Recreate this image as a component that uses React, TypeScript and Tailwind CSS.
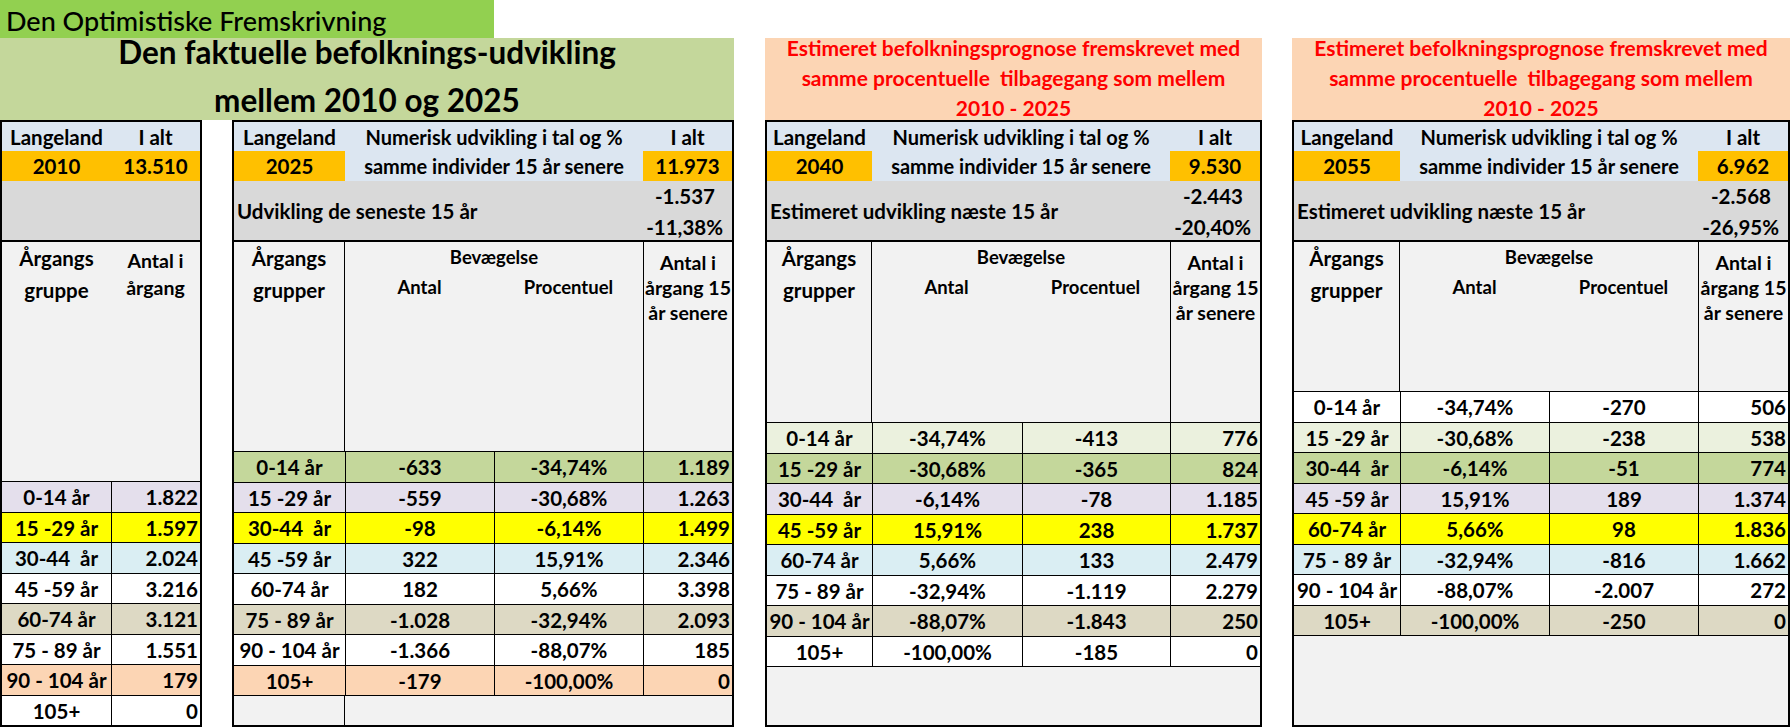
import React from 'react';

type Row = { g: string; a?: string; b?: string; n: string; bg: string };

const LAV = 'bg-[#e4dfec]';
const YEL = 'bg-[#ffff00]';
const BLU = 'bg-[#daeef3]';
const WHI = 'bg-white';
const TAN = 'bg-[#ddd9c4]';
const PCH = 'bg-[#fcd5b4]';
const GRN = 'bg-[#c4d79b]';
const LGR = 'bg-[#ebf1de]';

const rows2010: Row[] = [
  { g: '0-14 år', n: '1.822', bg: LAV },
  { g: '15 -29 år', n: '1.597', bg: YEL },
  { g: '30-44  år', n: '2.024', bg: BLU },
  { g: '45 -59 år', n: '3.216', bg: WHI },
  { g: '60-74 år', n: '3.121', bg: TAN },
  { g: '75 - 89 år', n: '1.551', bg: WHI },
  { g: '90 - 104 år', n: '179', bg: PCH },
  { g: '105+', n: '0', bg: WHI },
];

const rows2025: Row[] = [
  { g: '0-14 år', a: '-633', b: '-34,74%', n: '1.189', bg: GRN },
  { g: '15 -29 år', a: '-559', b: '-30,68%', n: '1.263', bg: LAV },
  { g: '30-44  år', a: '-98', b: '-6,14%', n: '1.499', bg: YEL },
  { g: '45 -59 år', a: '322', b: '15,91%', n: '2.346', bg: BLU },
  { g: '60-74 år', a: '182', b: '5,66%', n: '3.398', bg: WHI },
  { g: '75 - 89 år', a: '-1.028', b: '-32,94%', n: '2.093', bg: TAN },
  { g: '90 - 104 år', a: '-1.366', b: '-88,07%', n: '185', bg: WHI },
  { g: '105+', a: '-179', b: '-100,00%', n: '0', bg: PCH },
];

const rows2040: Row[] = [
  { g: '0-14 år', a: '-34,74%', b: '-413', n: '776', bg: LGR },
  { g: '15 -29 år', a: '-30,68%', b: '-365', n: '824', bg: GRN },
  { g: '30-44  år', a: '-6,14%', b: '-78', n: '1.185', bg: LAV },
  { g: '45 -59 år', a: '15,91%', b: '238', n: '1.737', bg: YEL },
  { g: '60-74 år', a: '5,66%', b: '133', n: '2.479', bg: BLU },
  { g: '75 - 89 år', a: '-32,94%', b: '-1.119', n: '2.279', bg: WHI },
  { g: '90 - 104 år', a: '-88,07%', b: '-1.843', n: '250', bg: TAN },
  { g: '105+', a: '-100,00%', b: '-185', n: '0', bg: WHI },
];

const rows2055: Row[] = [
  { g: '0-14 år', a: '-34,74%', b: '-270', n: '506', bg: WHI },
  { g: '15 -29 år', a: '-30,68%', b: '-238', n: '538', bg: LGR },
  { g: '30-44  år', a: '-6,14%', b: '-51', n: '774', bg: GRN },
  { g: '45 -59 år', a: '15,91%', b: '189', n: '1.374', bg: LAV },
  { g: '60-74 år', a: '5,66%', b: '98', n: '1.836', bg: YEL },
  { g: '75 - 89 år', a: '-32,94%', b: '-816', n: '1.662', bg: BLU },
  { g: '90 - 104 år', a: '-88,07%', b: '-2.007', n: '272', bg: WHI },
  { g: '105+', a: '-100,00%', b: '-250', n: '0', bg: TAN },
];

function OrangeTitle() {
  return (
    <div className="flex h-[82px] flex-col items-center justify-center bg-[#fcd5b4] pb-[3px] text-[21px] font-bold leading-[30px] text-[#ff0000]">
      <div>Estimeret befolkningsprognose fremskrevet med</div>
      <div className="whitespace-pre">samme procentuelle  tilbagegang som mellem</div>
      <div>2010 - 2025</div>
    </div>
  );
}

function FirstTable() {
  return (
    <div className="flex h-[607px] w-[202px] flex-col border-2 border-black text-[20.5px] font-bold">
      <div className="grid h-[29px] grid-cols-[109px_1fr] items-center bg-[#dce6f1] text-center">
        <div>Langeland</div>
        <div>I alt</div>
      </div>
      <div className="grid h-[30px] grid-cols-[109px_1fr] items-center bg-[#ffc000] text-center">
        <div>2010</div>
        <div>13.510</div>
      </div>
      <div className="h-[61px] border-b-2 border-black bg-[#d9d9d9]" />
      <div className="grid h-[239px] grid-cols-[109px_1fr] bg-[#f2f2f2] text-center">
        <div className="leading-[32px]">
          <div>Årgangs</div>
          <div>gruppe</div>
        </div>
        <div className="pt-[5px] text-[19.5px] leading-[27px]">
          <div>Antal i</div>
          <div>årgang</div>
        </div>
      </div>
      {rows2010.map((r) => (
        <div key={r.g} className={`grid h-[30.5px] grid-cols-[109px_1fr] border-t border-black ${r.bg}`}>
          <div className="flex items-center justify-center whitespace-pre">{r.g}</div>
          <div className="flex items-center justify-end border-l border-black pr-[2px]">{r.n}</div>
        </div>
      ))}
    </div>
  );
}

function Prognose({
  cols,
  year,
  total,
  label,
  delta,
  pct,
  headH,
  rows,
  splitFiller,
}: {
  cols: string;
  year: string;
  total: string;
  label: string;
  delta: string;
  pct: string;
  headH: string;
  rows: Row[];
  splitFiller?: boolean;
}) {
  return (
    <div className="flex h-[607px] flex-col border-2 border-black text-[20.5px] font-bold">
      <div className={`grid h-[29px] items-center bg-[#dce6f1] text-center ${cols}`}>
        <div>Langeland</div>
        <div className="col-span-2 text-[20px]">Numerisk udvikling i tal og %</div>
        <div>I alt</div>
      </div>
      <div className={`grid h-[30px] bg-[#dce6f1] text-center ${cols}`}>
        <div className="flex items-center justify-center bg-[#ffc000]">{year}</div>
        <div className="col-span-2 flex items-center justify-center text-[20px]">samme individer 15 år senere</div>
        <div className="flex items-center justify-center bg-[#ffc000]">{total}</div>
      </div>
      <div className={`grid h-[61px] border-b-2 border-black bg-[#d9d9d9] ${cols}`}>
        <div className="col-span-3 flex items-center whitespace-nowrap pl-[3px]">{label}</div>
        <div className="flex flex-col">
          <div className="flex flex-1 items-center justify-end pr-[17px]">{delta}</div>
          <div className="flex flex-1 items-center justify-end pr-[9px]">{pct}</div>
        </div>
      </div>
      <div className={`grid bg-[#f2f2f2] text-center ${headH} ${cols}`}>
        <div className="border-r border-black leading-[32px]">
          <div>Årgangs</div>
          <div>grupper</div>
        </div>
        <div className="col-span-2 flex flex-col text-[18.5px] leading-[30px]">
          <div>Bevægelse</div>
          <div className="grid grid-cols-2">
            <div>Antal</div>
            <div>Procentuel</div>
          </div>
        </div>
        <div className="whitespace-nowrap border-l border-black pt-[8px] text-[19.5px] leading-[25px]">
          <div>Antal i</div>
          <div>årgang 15</div>
          <div>år senere</div>
        </div>
      </div>
      {rows.map((r) => (
        <div key={r.g} className={`grid h-[30.5px] border-t border-black ${r.bg} ${cols}`}>
          <div className="flex items-center justify-center whitespace-pre">{r.g}</div>
          <div className="flex items-center justify-center border-l border-black">{r.a}</div>
          <div className="flex items-center justify-center border-l border-black">{r.b}</div>
          <div className="flex items-center justify-end border-l border-black pr-[2px]">{r.n}</div>
        </div>
      ))}
      <div className={`grid flex-1 border-t border-black bg-[#f2f2f2] ${cols}`}>
        <div className={splitFiller ? 'border-r border-black' : ''} />
      </div>
    </div>
  );
}

export default function App() {
  return (
    <div className="h-[728px] w-[1791px] overflow-hidden bg-white font-['Lato',sans-serif] text-black">
      <div className="flex h-[38px] w-[494px] items-center bg-[#92d050] pl-[6px] pt-[4px] text-[27px] font-medium">
        Den Optimistiske Fremskrivning
      </div>
      <div className="flex">
        <div className="w-[734px]">
          <div className="flex h-[82px] flex-col items-center justify-center bg-[#c4d79b] pb-[6px] text-[31.5px] font-bold leading-[48px]">
            <div>Den faktuelle befolknings-udvikling</div>
            <div>mellem 2010 og 2025</div>
          </div>
          <div className="flex gap-[30px]">
            <FirstTable />
            <div className="w-[502px]">
              <Prognose
                cols="grid-cols-[111px_149px_149px_1fr]"
                year="2025"
                total="11.973"
                label="Udvikling de seneste 15 år"
                delta="-1.537"
                pct="-11,38%"
                headH="h-[209px]"
                rows={rows2025}
                splitFiller
              />
            </div>
          </div>
        </div>
        <div className="ml-[31px] w-[497px]">
          <OrangeTitle />
          <Prognose
            cols="grid-cols-[105px_150px_148px_1fr]"
            year="2040"
            total="9.530"
            label="Estimeret udvikling næste 15 år"
            delta="-2.443"
            pct="-20,40%"
            headH="h-[180px]"
            rows={rows2040}
          />
        </div>
        <div className="ml-[30px] w-[498px]">
          <OrangeTitle />
          <Prognose
            cols="grid-cols-[106px_149px_149px_1fr]"
            year="2055"
            total="6.962"
            label="Estimeret udvikling næste 15 år"
            delta="-2.568"
            pct="-26,95%"
            headH="h-[149px]"
            rows={rows2055}
          />
        </div>
      </div>
    </div>
  );
}
